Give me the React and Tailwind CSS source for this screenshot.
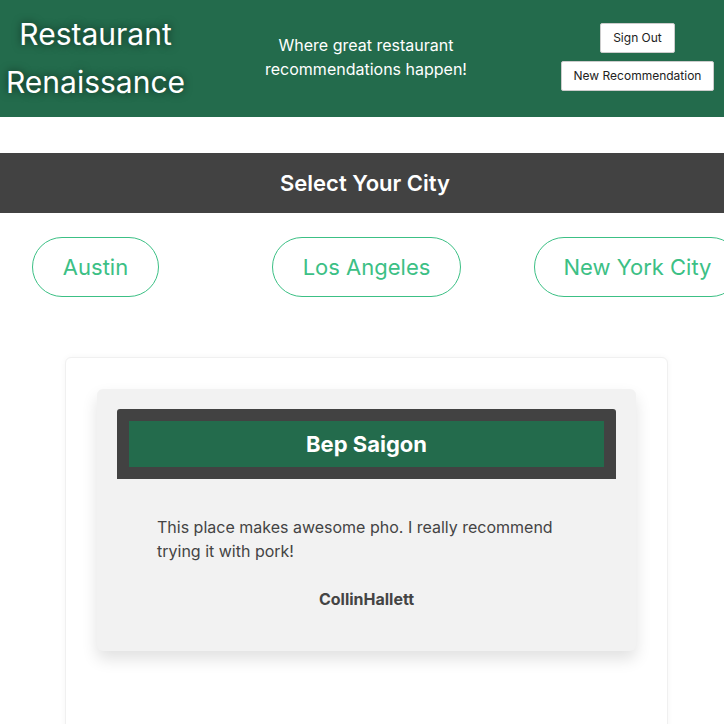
export default function App() {
  return (
    <div className="min-h-[724px] bg-white font-['Inter',sans-serif] overflow-hidden">
      <header className="h-[117px] bg-[#236b4c] flex items-center">
        <div className="w-[191px] text-center text-white text-[30px] leading-[48px] [text-shadow:0_0_8px_rgba(0,0,0,0.6)] pb-[2px]">
          Restaurant<br />Renaissance
        </div>
        <div className="flex-1 text-center text-white text-[16px] leading-[24px] pb-[4px]">
          Where great restaurant<br />recommendations happen!
        </div>
        <div className="w-[183px] pl-[10px] flex flex-col items-center gap-[8px] pb-[4px]">
          <button className="h-[30px] px-[12px] bg-white text-[#222] text-[12px] border border-[#ccc] rounded-[2px]">Sign Out</button>
          <button className="h-[30px] px-[12px] bg-white text-[#222] text-[12px] border border-[#ccc] rounded-[2px]">New Recommendation</button>
        </div>
      </header>
      <div className="mt-[36px] h-[60px] bg-[#424242] flex items-center justify-center text-white text-[22px] font-semibold pl-[6px]">
        Select Your City
      </div>
      <div className="mt-[24px] flex whitespace-nowrap">
        <button className="ml-[32px] shrink-0 h-[60px] w-[127px] rounded-full border border-[#3cc085] text-[#3cc085] text-[22px]">Austin</button>
        <button className="ml-[113px] shrink-0 h-[60px] w-[189px] rounded-full border border-[#3cc085] text-[#3cc085] text-[22px]">Los Angeles</button>
        <button className="ml-[73px] shrink-0 h-[60px] w-[207px] rounded-full border border-[#3cc085] text-[#3cc085] text-[22px]">New York City</button>
      </div>
      <div className="mt-[60px] mx-[65px] w-[603px] h-[400px] bg-white rounded-[6px] border border-[#f0f0f0] shadow-[0_0_6px_rgba(0,0,0,0.04)] pt-[31px] px-[31px]">
        <div className="bg-[#f2f2f2] rounded-[6px] shadow-[0_8px_16px_rgba(0,0,0,0.12)] pt-[20px] pb-[40px] px-[20px]">
          <div className="bg-[#424242] rounded-t-[3px] p-[12px]">
            <div className="bg-[#236b4c] h-[46px] flex items-center justify-center text-white text-[22px] font-bold">Bep Saigon</div>
          </div>
          <p className="mt-[36px] mx-[40px] max-w-[412px] text-[#444] text-[16px] leading-[24px]">
            This place makes awesome pho. I really recommend trying it with pork!
          </p>
          <p className="mt-[24px] text-center text-[#444] text-[16px] font-bold leading-[24px]">CollinHallett</p>
        </div>
      </div>
    </div>
  );
}
